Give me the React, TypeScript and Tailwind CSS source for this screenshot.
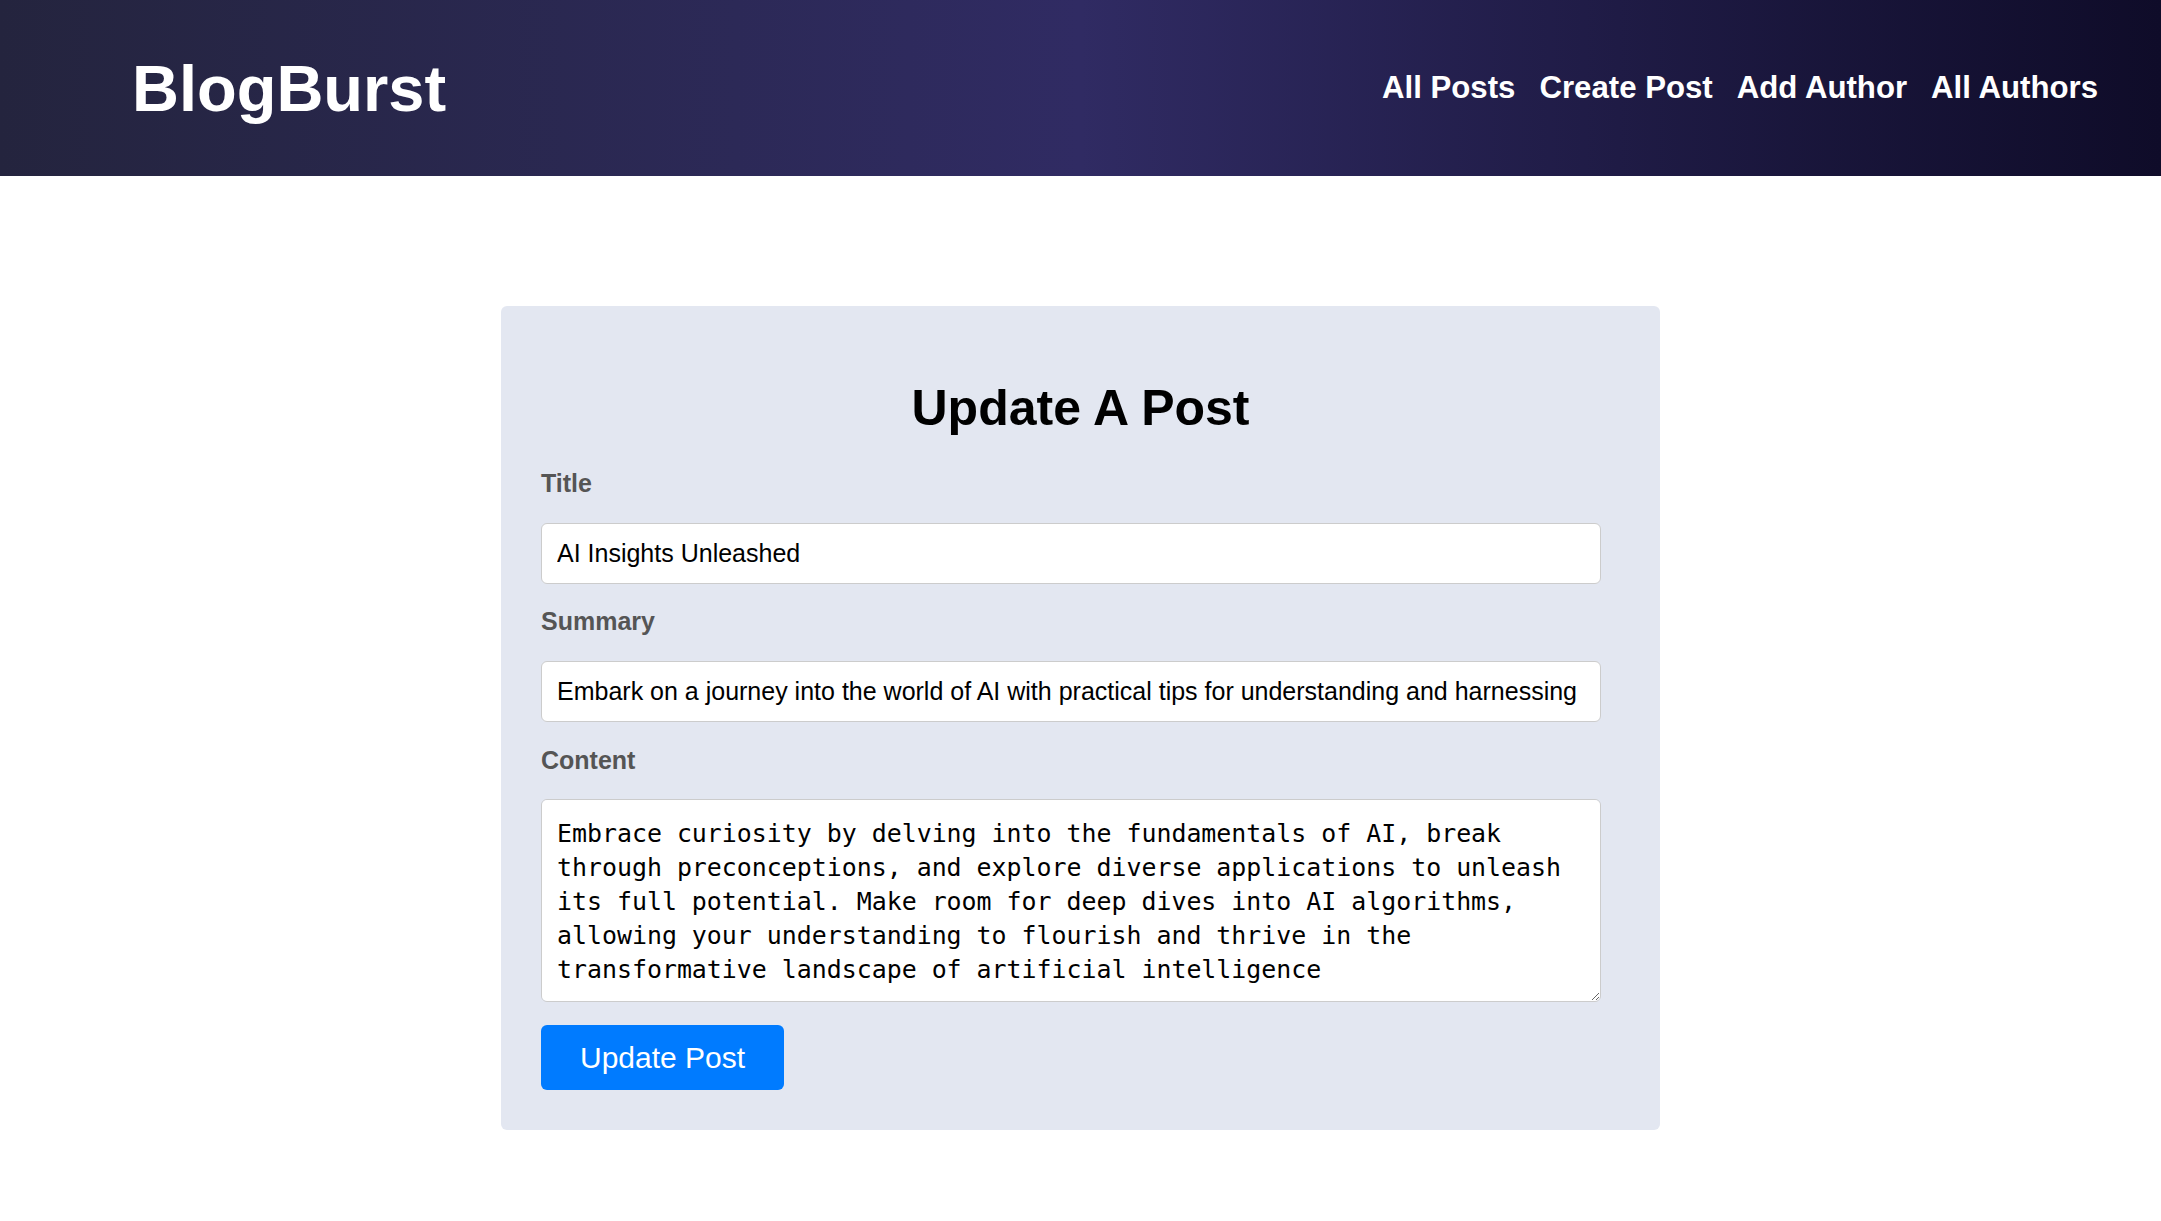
import { useState } from 'react';

const NAV_LINKS = ['All Posts', 'Create Post', 'Add Author', 'All Authors'];

export default function App() {
  const [title, setTitle] = useState('AI Insights Unleashed');
  const [summary, setSummary] = useState(
    'Embark on a journey into the world of AI with practical tips for understanding and harnessing its power in everyday life.'
  );
  const [content, setContent] = useState(
    'Embrace curiosity by delving into the fundamentals of AI, break through preconceptions, and explore diverse applications to unleash its full potential. Make room for deep dives into AI algorithms, allowing your understanding to flourish and thrive in the transformative landscape of artificial intelligence'
  );

  return (
    <div className="min-h-screen bg-white font-['Liberation_Sans',Arial,sans-serif]">
      {/* Header */}
      <header className="h-[176px] flex items-center justify-between pl-[132px] pr-[63px] bg-gradient-to-r from-[#24243e] via-[#302b63] to-[#0f0c29]">
        <h1 className="text-[65px] leading-[75px] font-bold text-white">BlogBurst</h1>
        <nav className="flex items-center gap-[24px]">
          {NAV_LINKS.map((link) => (
            <a key={link} href="#" className="text-[31.2px] leading-[36px] font-bold text-white">
              {link}
            </a>
          ))}
        </nav>
      </header>

      {/* Form card */}
      <main className="flex justify-center pt-[130px] pb-[90px]">
        <form
          className="w-[1159px] bg-[#e3e7f1] rounded-[6px] px-[40px] pt-[74px] pb-[40px] flex flex-col"
          onSubmit={(e) => e.preventDefault()}
        >
          <h2 className="text-[50px] leading-[56px] font-bold text-black text-center mb-[33px]">
            Update A Post
          </h2>

          <label className="text-[25px] leading-[29px] font-bold text-[#555] mb-[25px]">Title</label>
          <input
            value={title}
            onChange={(e) => setTitle(e.target.value)}
            className="w-[1060px] h-[61px] px-[15px] bg-white border border-[#ccc] rounded-[6px] text-[25px] text-black outline-none mb-[23px]"
          />

          <label className="text-[25px] leading-[29px] font-bold text-[#555] mb-[25px]">Summary</label>
          <input
            value={summary}
            onChange={(e) => setSummary(e.target.value)}
            className="w-[1060px] h-[61px] px-[15px] bg-white border border-[#ccc] rounded-[6px] text-[25px] text-black outline-none mb-[24px]"
          />

          <label className="text-[25px] leading-[29px] font-bold text-[#555] mb-[24px]">Content</label>
          <textarea
            value={content}
            onChange={(e) => setContent(e.target.value)}
            className="w-[1060px] h-[203px] px-[15px] pt-[17px] pb-[15px] bg-white border border-[#ccc] rounded-[6px] font-['DejaVu_Sans_Mono',monospace] text-[24.9px] leading-[34px] text-black outline-none mb-[23px]"
          />

          <div>
            <button
              type="submit"
              className="h-[65px] px-[39px] bg-[#007bff] rounded-[6px] text-[30px] leading-[35px] text-white"
            >
              Update Post
            </button>
          </div>
        </form>
      </main>
    </div>
  );
}
